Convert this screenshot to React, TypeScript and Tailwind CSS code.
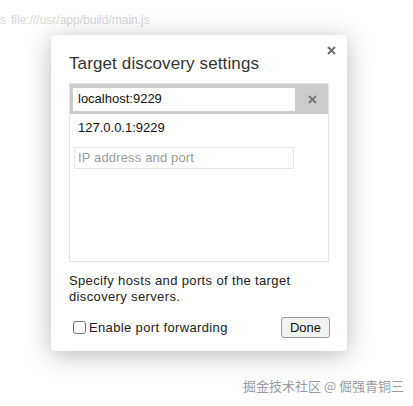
export default function App() {
  return (
    <div className="relative w-[413px] h-[406px] bg-white overflow-hidden font-['Liberation_Sans',Arial,sans-serif]">
      {/* page behind the dialog */}
      <div className="absolute top-[12px] left-0 flex text-[12px] leading-[16px] text-[#d6d6d6] whitespace-pre">
        <span>s</span>
        <span className="ml-[5px]">file:///usr/app/build/main.js</span>
      </div>

      <div className="pt-[35px] pl-[51px]">
        <div className="relative w-[296px] h-[316px] bg-white rounded-[4px] shadow-[0_4px_26px_rgba(0,0,0,0.28)] px-[18px] pt-[19px]">
          <button className="absolute top-[10px] right-[11px] w-[10px] h-[10px] flex items-center justify-center text-[#6e6e6e]">
            <svg width="9" height="9" viewBox="0 0 9 9">
              <path d="M1 1L8 8M8 1L1 8" stroke="currentColor" strokeWidth="2" />
            </svg>
          </button>

          <h2 className="text-[17px] leading-[20px] tracking-[0.12px] text-[#333]">Target discovery settings</h2>

          <div className="mt-[9px] w-[260px] h-[179px] border border-[#e4e4e4] flex flex-col">
            <div className="h-[30px] bg-[#cbcbcb] flex items-center pl-[3px]">
              <div className="w-[222px] h-[23px] bg-white flex items-center pl-[5px] text-[13px] text-[#111]">
                localhost:9229
              </div>
              <div className="flex-1 flex items-center justify-center text-[#777] pl-[2px]">
                <svg width="9" height="9" viewBox="0 0 9 9">
                  <path d="M1 1L8 8M8 1L1 8" stroke="currentColor" strokeWidth="2" />
                </svg>
              </div>
            </div>
            <div className="h-[28px] flex items-center pl-[8px] text-[13px] text-[#111]">127.0.0.1:9229</div>
            <div className="pl-[4px] pt-[5px]">
              <div className="w-[220px] h-[22px] border border-[#e6e6e6] flex items-center pl-[3px] text-[13px] tracking-[0.15px] text-[#9a9a9a]">
                IP address and port
              </div>
            </div>
          </div>

          <p className="mt-[11px] text-[13px] leading-[16px] tracking-[0.36px] text-[#222]">
            Specify hosts and ports of the target discovery servers.
          </p>

          <div className="mt-[12px] flex items-center justify-between">
            <label className="flex items-center pl-[4px] text-[13px] tracking-[0.36px] text-[#222]">
              <span className="w-[13px] h-[13px] border border-[#777] rounded-[3px] bg-white mr-[3px]" />
              Enable port forwarding
            </label>
            <button className="w-[49px] h-[21px] border border-[#9a9a9a] rounded-[3px] bg-[#f2f2f2] text-[13px] text-[#111] flex items-center justify-center mr-[-1px]">
              Done
            </button>
          </div>
        </div>
      </div>

      <div className="absolute left-[243px] top-[377px] text-[13px] leading-[18px] text-[#9a9a9a] font-['Noto_Sans_CJK_SC',sans-serif] whitespace-pre">
        掘金技术社区 @ 倔强青铜三
      </div>
    </div>
  );
}
